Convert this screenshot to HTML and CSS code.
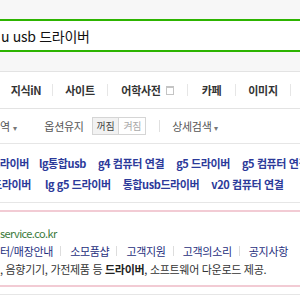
FILE: index.html
```html
<!DOCTYPE html>
<html lang="ko">
<head>
    <meta charset="UTF-8">
    <meta name="viewport" content="width=device-width, initial-scale=1.0">
    <title>u usb 드라이버 : 검색</title>
    <link rel="stylesheet" href="styles.css">
</head>
<body>
    <!-- 검색창 -->
    <div class="header">
        <div class="search-box">
            <span class="query">u usb 드라이버</span>
        </div>
    </div>

    <!-- 탭 -->
    <div class="tabs">
        <span class="tab w52">지식iN</span>
        <span class="sep"></span>
        <span class="tab w55">사이트</span>
        <span class="sep"></span>
        <span class="tab w80">어학사전 <span class="ext"></span></span>
        <span class="sep"></span>
        <span class="tab w48">카페</span>
        <span class="sep"></span>
        <span class="tab w55">이미지</span>
        <span class="sep"></span>
    </div>

    <!-- 옵션 -->
    <div class="options">
        <span class="opt">역 <span class="caret">▾</span></span>
        <span class="opt keep">옵션유지</span>
        <span class="toggle">
            <span class="on">꺼짐</span><span class="off">켜짐</span>
        </span>
        <span class="vsep"></span>
        <span class="opt">상세검색 <span class="caret">▾</span></span>
    </div>

    <!-- 연관검색어 -->
    <div class="related">
        <div class="row first">
            <a>드라이버</a>
            <a>lg통합usb</a>
            <a>g4 컴퓨터 연결</a>
            <a>g5 드라이버</a>
            <a>g5 컴퓨터 연결</a>
        </div>
        <div class="row second">
            <a>드라이버</a>
            <a>lg g5 드라이버</a>
            <a>통합usb드라이버</a>
            <a>v20 컴퓨터 연결</a>
        </div>
    </div>

    <!-- 사이트 결과 -->
    <div class="site">
        <div class="url">service.co.kr</div>
        <div class="links">
            <a>터/매장안내</a><span class="bar"></span>
            <a>소모품샵</a><span class="bar"></span>
            <a>고객지원</a><span class="bar"></span>
            <a>고객의소리</a><span class="bar"></span>
            <a>공지사항</a>
        </div>
        <div class="desc">, 음향기기, 가전제품 등 <b>드라이버</b>, 소프트웨어 다운로드 제공.</div>
    </div>
    <div class="next"></div>
</body>
</html>
```

FILE: styles.css
```css
body {
    margin: 0;
    padding: 0;
    font-family: "Noto Sans CJK KR", "Noto Sans", sans-serif;
    background-color: #fff;
    color: #333;
    overflow: hidden;
}

.header {
    background-color: #f7f7f7;
    height: 72px;
    padding-top: 19px;
    box-sizing: border-box;
    border-bottom: 1px solid #e3e3e3;
}

.search-box {
    margin: 0 -10px;
    height: 33px;
    box-sizing: border-box;
    border: 2px solid #2db400;
    background-color: #fff;
    display: flex;
    align-items: center;
    padding-left: 9px;
}

.query {
    font-size: 14px;
    letter-spacing: -0.3px;
    color: #111;
    white-space: nowrap;
}

.tabs {
    display: flex;
    align-items: center;
    height: 36px;
    border-bottom: 1px solid #e3e3e3;
}

.tab {
    font-size: 11px;
    font-weight: bold;
    letter-spacing: -0.3px;
    color: #333;
    text-align: center;
    white-space: nowrap;
    display: flex;
    align-items: center;
    justify-content: center;
}

.w52 { width: 52px; }
.w55 { width: 54px; }
.w80 { width: 79px; }
.w48 { width: 47px; }

.ext {
    display: inline-block;
    width: 6px;
    height: 6px;
    border: 1px solid #c4c4c4;
    border-top-width: 2px;
    margin-left: 5px;
}

.sep {
    width: 1px;
    height: 12px;
    background-color: #e6e6e6;
}

.options {
    display: flex;
    align-items: center;
    height: 34px;
    border-bottom: 1px solid #e6e6e6;
    font-size: 11px;
    letter-spacing: -0.3px;
    color: #555;
}

.opt {
    white-space: nowrap;
}

.caret {
    font-size: 8px;
    color: #777;
}

.keep {
    margin-left: 28px;
}

.toggle {
    display: flex;
    margin-left: 8px;
    border: 1px solid #d5d5d5;
    font-size: 10px;
}

.toggle span {
    padding: 1px 4px;
    line-height: 14px;
}

.toggle .on {
    background-color: #f2f2f2;
    color: #444;
    border-right: 1px solid #d5d5d5;
}

.toggle .off {
    color: #aaa;
}

.vsep {
    width: 1px;
    height: 12px;
    background-color: #e0e0e0;
    margin: 0 12px 0 13px;
}

.related {
    padding: 8px 0 8px;
    border-bottom: 1px solid #e6e6e6;
}

.row {
    display: flex;
    gap: 12px;
    height: 21px;
    align-items: center;
    white-space: nowrap;
}

.row a {
    font-size: 11px;
    font-weight: bold;
    letter-spacing: -0.4px;
    color: #2c3a9a;
}

.row.first a:first-child { margin-left: -10px; margin-right: -2px; }
.row.second a:first-child { margin-left: -8px; margin-right: 2px; }

.site {
    margin: 7px -10px 0;
    border-top: 2px solid #f2cbd4;
    border-bottom: 2px solid #f2cbd4;
    height: 77px;
    box-sizing: border-box;
    padding: 12px 0 0 10px;
    font-size: 11px;
    letter-spacing: -0.3px;
    white-space: nowrap;
}

.url {
    color: #3a7a3a;
    letter-spacing: -0.6px;
    line-height: 18px;
}

.links {
    display: flex;
    align-items: center;
    line-height: 18px;
}

.links a {
    color: #1f3080;
}

.bar {
    width: 1px;
    height: 10px;
    background-color: #ddd;
    margin: 0 9px 0 7px;
}

.desc {
    line-height: 18px;
    color: #333;
}

.desc b {
    color: #222;
}

.next {
    margin-top: 7px;
    border-top: 1px solid #e6e6e6;
}
```
